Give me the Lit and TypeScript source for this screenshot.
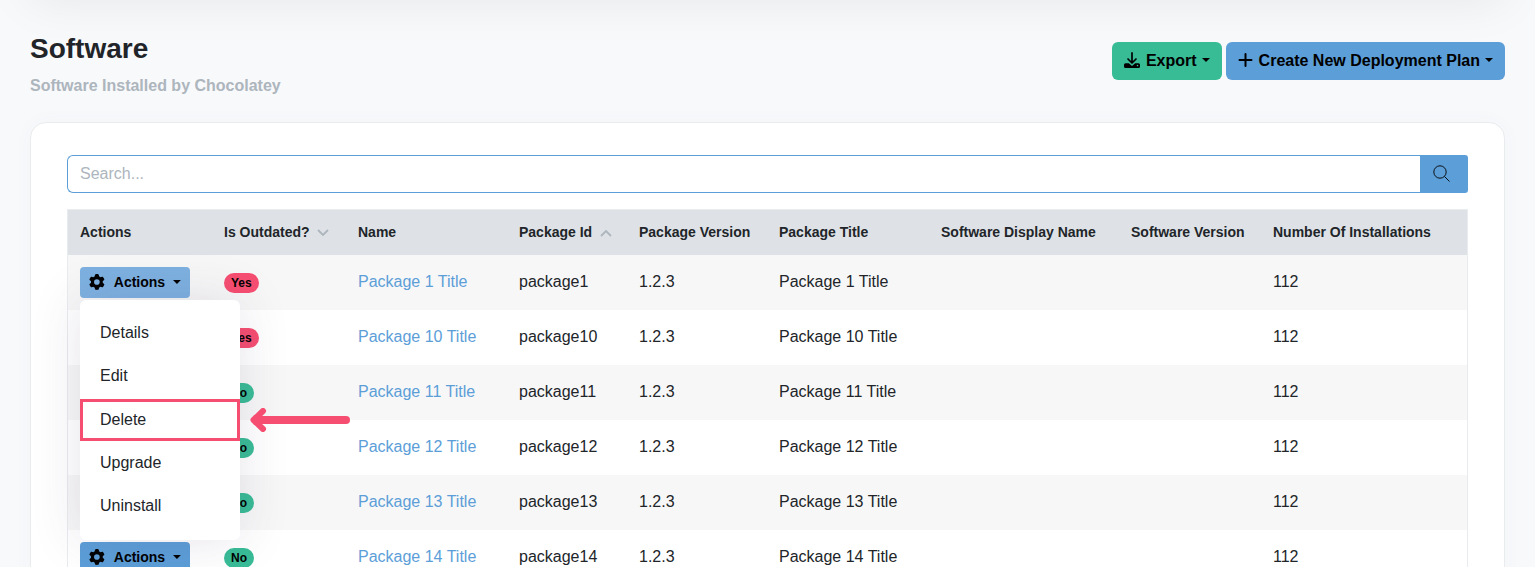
import { LitElement, html, css, svg, nothing } from "lit";
import { customElement, property } from "lit/decorators.js";

interface SoftwarePackage {
  id: number;
  outdated: boolean;
}

interface Column {
  label: string;
  sort?: "up" | "down";
}

const columns: Column[] = [
  { label: "Actions" },
  { label: "Is Outdated?", sort: "down" },
  { label: "Name" },
  { label: "Package Id", sort: "up" },
  { label: "Package Version" },
  { label: "Package Title" },
  { label: "Software Display Name" },
  { label: "Software Version" },
  { label: "Number Of Installations" },
];

const packages: SoftwarePackage[] = [
  { id: 1, outdated: true },
  { id: 10, outdated: true },
  { id: 11, outdated: false },
  { id: 12, outdated: false },
  { id: 13, outdated: false },
  { id: 14, outdated: false },
];

const menuItems = ["Details", "Edit", "Delete", "Upgrade", "Uninstall"];

const caret = html`<svg class="caret" viewBox="0 0 8 4" width="8" height="4" aria-hidden="true">
  <path d="M0 0h8L4 4z" fill="currentColor" />
</svg>`;

const gearPath =
  "M495.9 166.6c3.2 8.7 .5 18.4-6.4 24.6l-43.300 39.400c1.100 8.300 1.700 16.800 1.700 25.400s-.6 17.100-1.700 25.400l43.300 39.400c6.900 6.200 9.600 15.900 6.400 24.600c-4.400 11.900-9.700 23.300-15.800 34.300l-4.700 8.100c-6.600 11-14 21.400-22.100 31.200c-5.900 7.200-15.700 9.600-24.500 6.800l-55.700-17.700c-13.400 10.300-28.200 18.900-44 25.400l-12.500 57.100c-2 9.100-9 16.300-18.200 17.800c-13.800 2.300-28 3.500-42.500 3.500s-28.700-1.200-42.500-3.500c-9.200-1.500-16.200-8.700-18.200-17.800l-12.500-57.100c-15.800-6.500-30.600-15.100-44-25.400L83.100 425.900c-8.800 2.800-18.600 .3-24.500-6.800c-8.100-9.800-15.500-20.200-22.100-31.200l-4.700-8.100c-6.100-11-11.400-22.400-15.800-34.300c-3.200-8.700-.5-18.400 6.400-24.600l43.300-39.400C64.600 273.100 64 264.600 64 256s.6-17.100 1.700-25.400L22.400 191.200c-6.900-6.200-9.600-15.900-6.400-24.600c4.400-11.900 9.700-23.300 15.800-34.300l4.700-8.100c6.600-11 14-21.400 22.100-31.200c5.900-7.200 15.700-9.600 24.500-6.800l55.700 17.700c13.400-10.300 28.200-18.900 44-25.400l12.500-57.100c2-9.100 9-16.300 18.200-17.800C227.300 1.200 241.500 0 256 0s28.700 1.200 42.500 3.500c9.200 1.500 16.200 8.700 18.200 17.800l12.500 57.100c15.800 6.500 30.600 15.100 44 25.400l55.700-17.700c8.800-2.800 18.600-.3 24.500 6.800c8.100 9.800 15.500 20.200 22.100 31.200l4.700 8.100c6.100 11 11.400 22.400 15.800 34.300zM256 348a92 92 0 1 0 0-184 92 92 0 1 0 0 184z";

@customElement("actions-menu")
export class ActionsMenu extends LitElement {
  @property({ type: Boolean }) open = false;

  static styles = css`
    :host {
      display: block;
      position: relative;
      font-family: "Liberation Sans", Arial, sans-serif;
    }
    .toggle {
      display: flex;
      align-items: center;
      width: 110px;
      height: 31px;
      padding: 0 9px;
      border: 0;
      border-radius: 4px;
      background: #5c9ed8;
      color: #000;
      font: bold 14px/21px "Liberation Sans", Arial, sans-serif;
    }
    .toggle.open {
      background: #7db1e0;
    }
    .gear {
      margin: 0 9px 2px 0;
    }
    .caret {
      margin: 0 0 2px 8px;
    }
    .menu {
      position: absolute;
      z-index: 2;
      top: 33px;
      left: 0;
      box-sizing: border-box;
      width: 160px;
      height: 240px;
      margin: 0;
      padding: 11px 0 12px;
      display: grid;
      grid-auto-rows: 1fr;
      list-style: none;
      background: #fff;
      border-radius: 6px;
      box-shadow: 0 0 50px rgba(82, 63, 105, 0.15);
    }
    .item {
      position: relative;
      display: grid;
    }
    .link {
      display: flex;
      align-items: center;
      padding: 0 20px;
      color: #212529;
      font-size: 16px;
      line-height: 24px;
      text-decoration: none;
    }
    .highlight .link {
      margin-top: 1px;
      padding: 0 17px;
      border: 3px solid #f64e71;
    }
    .pointer {
      position: absolute;
      left: 170px;
      top: 10px;
    }
  `;

  render() {
    return html`
      <button class="toggle ${this.open ? "open" : ""}" type="button" aria-expanded=${this.open}>
        <svg class="gear" viewBox="0 0 512 512" width="16" height="16" aria-hidden="true">
          <path d=${gearPath} fill="currentColor" />
        </svg>
        Actions ${caret}
      </button>
      ${this.open
        ? html`<ul class="menu">
            ${menuItems.map(
              (label) => html`<li class="item ${label === "Delete" ? "highlight" : ""}">
                <a class="link" href="#">${label}</a>
                ${label === "Delete"
                  ? html`<svg class="pointer" viewBox="0 0 100 24" width="100" height="24" aria-hidden="true">
                      <path d="M13 3L3.500 12L13 21M6 9.500v5" fill="none" stroke="#f64e71" stroke-width="6" stroke-linecap="round" stroke-linejoin="round" />
                      <path d="M6 12h90" stroke="#f64e71" stroke-width="8" stroke-linecap="round" />
                    </svg>`
                  : nothing}
              </li>`
            )}
          </ul>`
        : nothing}
    `;
  }
}

@customElement("app-root")
export class AppRoot extends LitElement {
  static styles = css`
    :host {
      display: flex;
      flex-direction: column;
      height: 100vh;
      overflow: hidden;
      background: #f8f9fb;
      color: #212529;
      font: 16px/24px "Liberation Sans", Arial, sans-serif;
    }
    .topbar {
      flex: none;
      height: 60px;
      margin: -60px 30px 0;
      background: #fff;
      box-shadow: 0 0 50px rgba(0, 0, 0, 0.08);
    }
    .page {
      flex: none;
      padding: 31px 30px;
    }
    .heading {
      display: flex;
      justify-content: space-between;
      align-items: flex-start;
      margin-bottom: 24px;
    }
    .title {
      margin: 0;
      font-size: 28px;
      line-height: 36px;
    }
    .subtitle {
      margin: 7px 0 0;
      font-size: 16px;
      line-height: 24px;
      font-weight: bold;
      color: #adb5bd;
    }
    .buttons {
      display: flex;
      gap: 4px;
      padding-top: 11px;
    }
    .button {
      display: flex;
      align-items: center;
      height: 38px;
      padding: 0 12px;
      border: 0;
      border-radius: 6px;
      background: #5c9ed8;
      color: #000;
      font: bold 16px/24px "Liberation Sans", Arial, sans-serif;
    }
    .button.export {
      background: #38bc96;
    }
    .button .icon {
      margin: 0 6px 2px 0;
    }
    .button .caret {
      margin: 0 0 2px 5px;
    }
    .card {
      padding: 32px 36px;
      border: 1px solid #e9ecef;
      border-radius: 16px;
      background: #fff;
      box-shadow: 0 0 20px rgba(76, 87, 125, 0.03);
    }
    .search {
      display: flex;
      height: 38px;
      margin-bottom: 16px;
    }
    .field {
      flex: 1;
      min-width: 0;
      box-sizing: border-box;
      padding: 0 12px;
      border: 1px solid #5c9ed8;
      border-right: 0;
      border-radius: 6px 0 0 6px;
      background: #fff;
      font: 16px/24px "Liberation Sans", Arial, sans-serif;
      color: #212529;
    }
    .field::placeholder {
      color: #adb5bd;
      opacity: 1;
    }
    .go {
      display: flex;
      align-items: center;
      width: 48px;
      padding: 0 13px 2px;
      border: 0;
      border-radius: 0 3px 3px 0;
      background: #5c9ed8;
      color: #000;
    }
    .frame {
      border: 1px solid #e9ecef;
    }
    .table {
      width: 100%;
      table-layout: fixed;
      border-collapse: collapse;
    }
    .head {
      height: 45px;
      padding: 0 12px;
      text-align: left;
      font-size: 14px;
      line-height: 21px;
      white-space: nowrap;
      background: #dee2e6;
    }
    .cell {
      height: 31px;
      padding: 12px;
      line-height: 29px;
      vertical-align: top;
    }
    .row:nth-child(odd) {
      background: #f7f7f7;
    }
    .chevron {
      margin-left: 4px;
    }
    .name {
      color: #5c9ed8;
      text-decoration: none;
    }
    .badge {
      display: block;
      width: fit-content;
      margin-top: 6px;
      padding: 0 7px;
      border-radius: 10px;
      background: #38bc96;
      color: #000;
      font-size: 12px;
      line-height: 20px;
      font-weight: bold;
    }
    .badge.yes {
      background: #f64e71;
    }
    .col-actions { width: 144px; }
    .col-outdated { width: 134px; }
    .col-name { width: 161px; }
    .col-id { width: 120px; }
    .col-version { width: 140px; }
    .col-title { width: 162px; }
    .col-display { width: 190px; }
    .col-software { width: 142px; }
    .col-count { width: 206px; }
  `;

  private renderHead(column: Column) {
    return html`<th class="head" scope="col">
      ${column.label}
      ${column.sort
        ? html`<svg class="chevron" viewBox="0 0 12 8" width="12" height="8" aria-hidden="true">
            ${svg`<path d=${column.sort === "down" ? "M1 1l5 5l5-5" : "M1 7l5-5l5 5"} fill="none" stroke="#adb5bd" stroke-width="1.800" />`}
          </svg>`
        : nothing}
    </th>`;
  }

  private renderRow(item: SoftwarePackage, index: number) {
    return html`<tr class="row">
      <td class="cell"><actions-menu ?open=${index === 0}></actions-menu></td>
      <td class="cell"><span class="badge ${item.outdated ? "yes" : ""}">${item.outdated ? "Yes" : "No"}</span></td>
      <td class="cell"><a class="name" href="#">Package ${item.id} Title</a></td>
      <td class="cell">package${item.id}</td>
      <td class="cell">1.2.3</td>
      <td class="cell">Package ${item.id} Title</td>
      <td class="cell"></td>
      <td class="cell"></td>
      <td class="cell">112</td>
    </tr>`;
  }

  render() {
    return html`
      <div class="topbar"></div>
      <main class="page">
        <header class="heading">
          <div>
            <h1 class="title">Software</h1>
            <p class="subtitle">Software Installed by Chocolatey</p>
          </div>
          <div class="buttons">
            <button class="button export" type="button">
              <svg class="icon" viewBox="0 0 16 16" width="16" height="16" aria-hidden="true">
                <path d="M8 .9v9.600M4 7l4 4l4-4" fill="none" stroke="currentColor" stroke-width="1.700" stroke-linecap="round" stroke-linejoin="round" />
                <path d="M1.500 11.300h3.300L8 14l3.200-2.700h3.300A1.500 1.500 0 0 1 16 12.800v1.700a1.500 1.500 0 0 1-1.500 1.500h-13A1.500 1.500 0 0 1 0 14.500v-1.700a1.500 1.500 0 0 1 1.500-1.500z" fill="currentColor" />
                <circle cx="13.500" cy="13.600" r=".8" fill="#38bc96" />
              </svg>
              Export ${caret}
            </button>
            <button class="button" type="button">
              <svg class="icon" viewBox="0 0 15 14" width="15" height="14" aria-hidden="true">
                <path d="M7.500 1v12M1.500 7h12" stroke="currentColor" stroke-width="2" stroke-linecap="round" />
              </svg>
              Create New Deployment Plan ${caret}
            </button>
          </div>
        </header>
        <section class="card">
          <form class="search" role="search">
            <input class="field" type="search" placeholder="Search..." aria-label="Search" />
            <button class="go" type="button" aria-label="Run search">
              <svg viewBox="0 0 17 17" width="17" height="17" aria-hidden="true">
                <circle cx="7" cy="7" r="6.200" fill="none" stroke="currentColor" stroke-width=".9" />
                <path d="M11.500 11.500l5 5" stroke="currentColor" stroke-width=".9" />
              </svg>
            </button>
          </form>
          <div class="frame">
            <table class="table">
              <colgroup>
                <col class="col-actions" />
                <col class="col-outdated" />
                <col class="col-name" />
                <col class="col-id" />
                <col class="col-version" />
                <col class="col-title" />
                <col class="col-display" />
                <col class="col-software" />
                <col class="col-count" />
              </colgroup>
              <thead>
                <tr>${columns.map((column) => this.renderHead(column))}</tr>
              </thead>
              <tbody>${packages.map((item, index) => this.renderRow(item, index))}</tbody>
            </table>
          </div>
        </section>
      </main>
    `;
  }
}
